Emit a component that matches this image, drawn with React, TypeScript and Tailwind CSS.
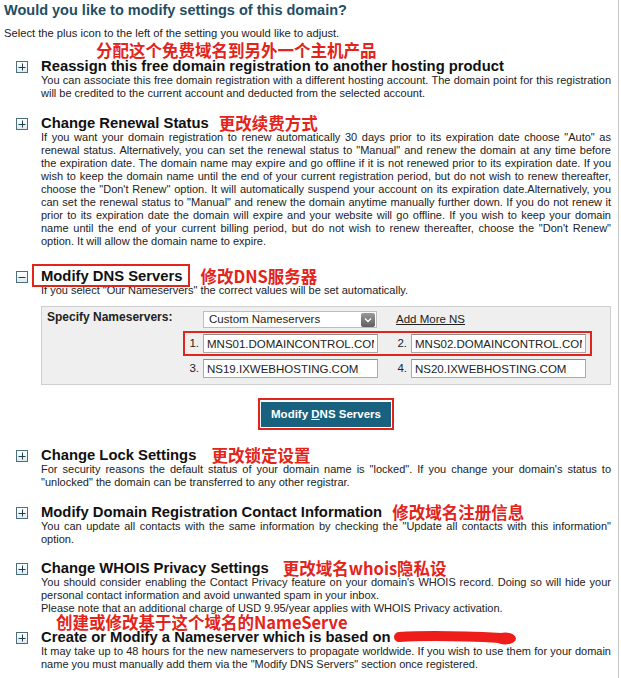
import React from "react";

// Domain settings page: expandable rows, red notes are overlays on the screenshot
const note = "font-['Noto_Sans_CJK_SC','Liberation_Sans',sans-serif] font-bold text-[16.5px] leading-[16px] text-[#e3241b]";
const para = "text-justify text-[11px] leading-[13px] text-[#222]";

const Toggle = ({ open }: { open?: boolean }) => (
  <span className="mt-[3px] flex h-[12px] w-[12px] shrink-0 items-center justify-center border border-[#4b6f7d] bg-[linear-gradient(#ffffff,#e1eaee)]">
    <svg width="8" height="8" viewBox="0 0 8 8">
      <path d={open ? "M0.5 4.5h7" : "M0.5 4.5h7M4.5 0.5v7"} stroke="#1f3f4c" strokeWidth="1" />
    </svg>
  </span>
);

type SectionProps = {
  title: React.ReactNode;
  open?: boolean;
  className?: string;
  children?: React.ReactNode;
};

const Section = ({ title, open, className = "", children }: SectionProps) => (
  <div className={`flex gap-[13px] pl-[16px] ${className}`}>
    <Toggle open={open} />
    <div className="w-[570px]">
      <h2 className="relative flex h-[16px] items-center whitespace-nowrap text-[14.8px] font-bold leading-[16px] text-[#111]">
        {title}
      </h2>
      {children}
    </div>
  </div>
);

const NsInput = ({ value }: { value: string }) => (
  <input
    readOnly
    value={value}
    className="h-[19px] w-[175px] border border-[#aaaaaa] border-t-[#8c8c8c] bg-white px-[3px] py-0 text-[11.5px] text-[#222] outline-none font-['Liberation_Sans',Arial,sans-serif]"
  />
);

const Num = ({ n }: { n: string }) => (
  <span className="pr-[4px] text-right text-[11.5px] leading-[19px] text-[#222]">{n}</span>
);

export default function App() {
  return (
    <div className="min-h-[678px] w-[619px] border-r border-[#c8c8c8] bg-white pt-[1px] font-['Liberation_Sans',Arial,sans-serif]">
      <h1 className="pl-[4px] text-[14.5px] font-bold leading-[18px] text-[#1f4e63]">
        Would you like to modify settings of this domain?
      </h1>
      <p className="mt-[8px] pl-[4px] text-[11.2px] leading-[13px] text-[#222]">
        Select the plus icon to the left of the setting you would like to adjust.
      </p>
      <div className={`${note} mt-[2px] pl-[96px]`}>分配这个免费域名到另外一个主机产品</div>

      <Section title="Reassign this free domain registration to another hosting product">
        <p className={para}>
          You can associate this free domain registration with a different hosting account. The domain point for this registration will be credited to the current account and deducted from the selected account.
        </p>
      </Section>

      <Section
        className="mt-[15px]"
        title={
          <>
            Change Renewal Status<span className={`${note} ml-[10px]`}>更改续费方式</span>
          </>
        }
      >
        <p className={para}>
          If you want your domain registration to renew automatically 30 days prior to its expiration date choose "Auto" as renewal status. Alternatively, you can set the renewal status to "Manual" and renew the domain at any time before the expiration date. The domain name may expire and go offline if it is not renewed prior to its expiration date. If you wish to keep the domain name until the end of your current registration period, but do not wish to renew thereafter, choose the "Don't Renew" option. It will automatically suspend your account on its expiration date.Alternatively, you can set the renewal status to "Manual" and renew the domain anytime manually further down. If you do not renew it prior to its expiration date the domain will expire and your website will go offline. If you wish to keep your domain name until the end of your current billing period, but do not wish to renew thereafter, choose the "Don't Renew" option. It will allow the domain name to expire.
        </p>
      </Section>

      <Section
        open
        className="mt-[20px]"
        title={
          <>
            <span className="relative inline-block">
              Modify DNS Servers
              <span className="absolute -bottom-[3px] -left-[9px] -right-[8px] -top-[4px] border-2 border-[#e3241b]" />
            </span>
            <span className={`${note} ml-[18px]`}>修改DNS服务器</span>
          </>
        }
      >
        <p className="text-[11px] leading-[13px] text-[#222]">
          If you select "Our Nameservers" the correct values will be set automatically.
        </p>

        <div className="mt-[9px] flex border border-[#cfcfcf] bg-[#efefef] pb-[6px] pl-[5px] pt-[4px]">
          <div className="w-[137px] text-[12px] font-bold leading-[13px] text-[#222]">Specify Nameservers:</div>
          <div className="relative grid grid-cols-[19px_175px_33px_175px] gap-y-[6px]">
            <span />
            <div className="flex h-[17px] w-[174px] items-center justify-between border border-[#bdbdbd] bg-white pl-[5px] pr-[1px] text-[11.5px] text-[#222]">
              Custom Nameservers
              <span className="flex h-[14px] w-[14px] items-center justify-center rounded-[2px] bg-[linear-gradient(#9a9a9a,#5e5e5e)]">
                <svg width="8" height="6" viewBox="0 0 8 6">
                  <path d="M1 1.5l3 3 3-3" stroke="#fff" strokeWidth="1.4" fill="none" />
                </svg>
              </span>
            </div>
            <span className="col-span-2 pl-[18px] text-[11.5px] leading-[17px] text-[#222] underline">Add More NS</span>

            <Num n="1." />
            <NsInput value="MNS01.DOMAINCONTROL.COM" />
            <Num n="2." />
            <NsInput value="MNS02.DOMAINCONTROL.COM" />

            <Num n="3." />
            <NsInput value="NS19.IXWEBHOSTING.COM" />
            <Num n="4." />
            <NsInput value="NS20.IXWEBHOSTING.COM" />

            <span className="absolute left-[-1px] top-[20px] h-[25px] w-[409px] border-2 border-[#e3241b]" />
          </div>
        </div>

        <div className="mt-[13px] flex justify-center">
          <div className="border-2 border-[#e3241b] bg-white p-[1px]">
            <button className="h-[25px] w-[130px] bg-[#19627f] text-[11.5px] font-bold text-white">
              Modify <span className="underline">D</span>NS Servers
            </button>
          </div>
        </div>
      </Section>

      <Section
        className="mt-[17px]"
        title={
          <>
            Change Lock Settings<span className={`${note} ml-[15px]`}>更改锁定设置</span>
          </>
        }
      >
        <p className={para}>
          For security reasons the default status of your domain name is "locked". If you change your domain's status to "unlocked" the domain can be transferred to any other registrar.
        </p>
      </Section>

      <Section
        className="mt-[15px]"
        title={
          <>
            Modify Domain Registration Contact Information<span className={`${note} ml-[10px]`}>修改域名注册信息</span>
          </>
        }
      >
        <p className={para}>
          You can update all contacts with the same information by checking the "Update all contacts with this information" option.
        </p>
      </Section>

      <Section
        className="mt-[14px]"
        title={
          <>
            Change WHOIS Privacy Settings<span className={`${note} ml-[14px]`}>更改域名whois隐私设</span>
          </>
        }
      >
        <p className={para}>
          You should consider enabling the Contact Privacy feature on your domain's WHOIS record. Doing so will hide your personal contact information and avoid unwanted spam in your inbox.
        </p>
        <p className="text-[11px] leading-[13px] text-[#222]">
          Please note that an additional charge of USD 9.95/year applies with WHOIS Privacy activation.
        </p>
      </Section>

      <Section
        className="mt-[14px]"
        title={
          <>
            <span className={`${note} absolute left-[15px] top-[-15px]`}>创建或修改基于这个域名的NameServe</span>
            Create or Modify a Nameserver which is based on
            <svg className="ml-[2px]" width="125" height="15" viewBox="0 0 125 15">
              <path d="M6 7C30 5.5 70 6 108 8" stroke="#ef1c1c" strokeWidth="10" strokeLinecap="round" fill="none" />
              <ellipse cx="112" cy="8.5" rx="11" ry="6" fill="#ef1c1c" />
            </svg>
          </>
        }
      >
        <p className={para}>
          It may take up to 48 hours for the new nameservers to propagate worldwide. If you wish to use them for your domain name you must manually add them via the "Modify DNS Servers" section once registered.
        </p>
      </Section>
    </div>
  );
}
